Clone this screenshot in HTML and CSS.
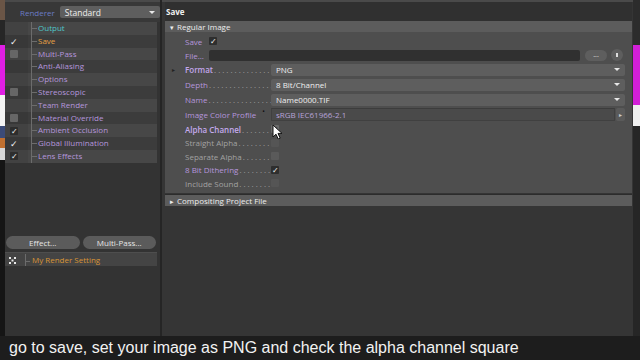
FILE: index.html
```html
<!DOCTYPE html>
<html lang="en">
<head>
  <meta charset="utf-8">
  <title>Render Settings - Save</title>
  <link rel="stylesheet" href="styles.css">
</head>
<body>
  <div class="screen">
    <div class="main">
      <div class="desk desk-left"></div>

      <!-- left: render setting list -->
      <aside class="left">
        <div class="renderer">
          <span class="renderer-label">Renderer</span>
          <div class="select renderer-select"><span>Standard</span><i class="arrow"></i></div>
        </div>
        <ul class="tree">
          <li class="alt"><span class="chk"></span><span class="node teal">Output</span></li>
          <li><span class="chk"><b class="tick">✓</b></span><span class="node orange">Save</span></li>
          <li class="alt"><span class="chk"><b class="box"></b></span><span class="node">Multi-Pass</span></li>
          <li><span class="chk"></span><span class="node">Anti-Aliasing</span></li>
          <li class="alt"><span class="chk"></span><span class="node">Options</span></li>
          <li><span class="chk"><b class="box"></b></span><span class="node">Stereoscopic</span></li>
          <li class="alt"><span class="chk"></span><span class="node">Team Render</span></li>
          <li><span class="chk"><b class="box"></b></span><span class="node">Material Override</span></li>
          <li class="alt"><span class="chk"><b class="box on">✓</b></span><span class="node">Ambient Occlusion</span></li>
          <li><span class="chk"><b class="tick">✓</b></span><span class="node">Global Illumination</span></li>
          <li class="alt"><span class="chk"><b class="box on">✓</b></span><span class="node">Lens Effects</span></li>
        </ul>
        <div class="left-fill"></div>
        <div class="left-buttons">
          <button>Effect...</button>
          <button>Multi-Pass...</button>
        </div>
        <div class="setting-row">
          <svg class="setting-icon" width="7" height="7" viewBox="0 0 7 7"><g fill="#e8e8e8"><rect x="0" y="0" width="2" height="2"/><rect x="5" y="0" width="2" height="2"/><rect x="2.5" y="2.5" width="2" height="2"/><rect x="0" y="5" width="2" height="2"/><rect x="5" y="5" width="2" height="2"/></g></svg>
          <span class="setting-name">My Render Setting</span>
        </div>
      </aside>

      <div class="vsep"></div>

      <!-- right: save page -->
      <section class="right">
        <div class="head">Save</div>
        <div class="group-bar"><span class="tri">▾</span>Regular Image</div>
        <div class="group-body">
          <div class="prop">
            <span class="bullet"></span><span class="label short">Save</span>
            <span class="cb on">✓</span>
          </div>
          <div class="prop">
            <span class="bullet"></span><span class="label short">File...</span>
            <div class="file-field"></div>
            <button class="pill">...</button>
            <button class="round"><i></i></button>
          </div>
          <div class="prop tall">
            <span class="bullet">▸</span><span class="label strong"><span>Format</span><span class="dots">.....................</span></span>
            <div class="select"><span>PNG</span><i class="arrow"></i></div>
          </div>
          <div class="prop tall">
            <span class="bullet"></span><span class="label"><span>Depth</span><span class="dots">.....................</span></span>
            <div class="select"><span>8 Bit/Channel</span><i class="arrow"></i></div>
          </div>
          <div class="prop tall">
            <span class="bullet"></span><span class="label"><span>Name</span><span class="dots">.....................</span></span>
            <div class="select"><span>Name0000.TIF</span><i class="arrow"></i></div>
          </div>
          <div class="prop tall">
            <span class="bullet"></span><span class="label"><span>Image Color Profile</span><span class="mark">•</span></span>
            <div class="profile">sRGB IEC61966-2.1</div>
            <button class="side-btn">▸</button>
          </div>
          <div class="prop">
            <span class="bullet"></span><span class="label semi"><span>Alpha Channel</span><span class="dots">.....................</span></span>
            <span class="cb hover">✓
              <svg class="cursor" width="11" height="16" viewBox="0 0 11 16"><path d="M1 1 L1 13 L4 10.2 L6.2 15 L8.2 14.1 L6 9.4 L10 9.4 Z" fill="#fff" stroke="#111" stroke-width="1" stroke-linejoin="round"/></svg>
            </span>
          </div>
          <div class="prop short-row">
            <span class="bullet"></span><span class="label dim"><span>Straight Alpha</span><span class="dots">.....................</span></span>
            <span class="cb off"></span>
          </div>
          <div class="prop short-row">
            <span class="bullet"></span><span class="label dim"><span>Separate Alpha</span><span class="dots">.....................</span></span>
            <span class="cb"></span>
          </div>
          <div class="prop short-row">
            <span class="bullet"></span><span class="label"><span>8 Bit Dithering</span><span class="dots">.....................</span></span>
            <span class="cb on">✓</span>
          </div>
          <div class="prop short-row">
            <span class="bullet"></span><span class="label dim"><span>Include Sound</span><span class="dots">.....................</span></span>
            <span class="cb off"></span>
          </div>
        </div>
        <div class="group-bar closed"><span class="tri">▸</span>Compositing Project File</div>
        <div class="right-fill"></div>
      </section>

      <div class="desk desk-right"></div>
    </div>
    <div class="caption">go to save, set your image as PNG and check the alpha channel square</div>
  </div>
</body>
</html>
```

FILE: styles.css
```css
/* --- page --- */
*{box-sizing:border-box}
body{margin:0;background:#1c1c1c;font-family:"Open Sans",Arial,sans-serif;font-size:8px;color:#ddd}
.screen{width:640px;height:360px;display:flex;flex-direction:column;overflow:hidden}
.main{height:336px;display:flex;background:#2f2f2f}
ul{list-style:none;margin:0;padding:0}
button{font-family:inherit;font-size:8px;border:none;color:#e6e6e6;padding:0;cursor:pointer}

/* --- bits of the desktop showing at the sides --- */
.desk{flex:none}
.desk-left{width:5px;background:linear-gradient(#6a5546 0 20px,#262626 20px 45px,#e01ee4 45px 95px,#f3f3f3 95px 126px,#3b4b78 126px 138px,#c07030 138px 148px,#d8d8d8 148px 160px,#151515 160px)}
.desk-right{width:7px;background:linear-gradient(#2c2c2c 0 45px,#d21fd8 45px 105px,#efefef 105px 126px,#262626 126px)}

/* --- left panel --- */
.left{width:155px;display:flex;flex-direction:column;background:#333;border-top:2px solid #4a4a4a}
.renderer{height:20px;display:flex;align-items:center;padding-left:15px;gap:5px;background:#383838}
.renderer-label{color:#6b7cc4;font-size:8px}
.select{position:relative;display:flex;align-items:center;height:12px;background:#5e5e5e;border-radius:2px;padding-left:5px;color:#eee}
.renderer-select{width:96px;font-size:8.5px}
.arrow{position:absolute;right:5px;top:4.5px;width:0;height:0;border-left:3px solid transparent;border-right:3px solid transparent;border-top:3px solid #e8e8e8}

.tree{width:152px}
.tree li{display:flex;height:12.8px;background:#3c3c3c}
.tree li.alt{background:#474747}
.chk{width:23px;display:flex;align-items:center;padding-left:5px;background:rgba(0,0,0,.06)}
.tick{font-weight:normal;color:#f2f2f2;font-size:9px;line-height:1}
.box{width:8px;height:8px;background:#666;border-radius:1px;font-size:8px;line-height:8px;text-align:center;color:#f2f2f2;font-weight:normal}
.box.on{background:#2d2d2d}
.node{position:relative;flex:1;margin-left:3px;padding-left:6px;border-left:1px solid #6c6c6c;line-height:12.8px;color:#b596dc}
.node::before{content:"";position:absolute;left:0;top:6px;width:5px;height:1px;background:#6c6c6c}
.node.teal{color:#4fc6c8}
.node.orange{color:#e6a044}

.left-fill{flex:1}
.left-buttons{display:flex;gap:3px;padding:0 4px 0 1px;margin-bottom:3px}
.left-buttons button{flex:1;height:13px;background:#5b5b5b;border-radius:7px;font-size:8px}
.setting-row{display:flex;align-items:center;height:14px;margin:0 3px 70px 0;border-top:1px solid #4e4e4e;background:#444;padding-top:1px}
.setting-icon{margin:0 9px 0 4px}
.setting-name{position:relative;padding-left:6px;border-left:1px solid #6c6c6c;color:#d89436;line-height:12px}
.setting-name::before{content:"";position:absolute;left:0;top:7px;width:4px;height:1px;background:#6c6c6c}

.vsep{width:2px;background:#252525}

/* --- right panel --- */
.right{flex:1;display:flex;flex-direction:column;padding-left:3px;padding-right:1px;background:#353535;border-top:2px solid #4a4a4a}
.head{height:19px;line-height:20px;padding-left:1px;background:#303030;color:#f0f0f0;font-weight:bold;font-size:8px}
.group-bar{height:11px;line-height:11px;background:#5c5c5c;color:#ececec;padding-left:5px;font-size:8px}
.group-bar.closed{margin-top:1px;border-top:1px solid #2c2c2c;height:12px}
.tri{display:inline-block;width:7px;font-size:7px}
.group-body{height:161px;background:#4e4e4e;padding:2px 7px 0 0}

.prop{display:flex;align-items:center;height:14px}
.prop.tall{height:15px}
.prop.short-row{height:13.5px}
.bullet{width:20px;padding-left:7px;font-size:6px;color:#222}
.label{width:86px;display:flex;align-items:center;white-space:nowrap;color:#b596dc}
.label.short{width:24px}
.label.strong{color:#c2a6ea;font-weight:600}
.label.semi{color:#c4aaec;font-weight:600}
.label.dim{color:#a2a2a2}
.dots{flex:1;min-width:0;overflow:hidden;letter-spacing:2px;margin-left:1px;color:#a0a0a0;font-weight:normal}
.mark{position:relative;top:-3px;margin-left:6px;color:#111;font-size:7px}

.select{flex:1}
.file-field{flex:1;height:11px;background:#303030;border-radius:2px}
.pill{width:22px;height:11px;margin-left:5px;border-radius:6px;background:#5e5e5e;font-size:7px;line-height:6px}
.round{width:12px;height:12px;margin:0 2px 0 4px;border-radius:50%;background:#5e5e5e;display:flex;align-items:center;justify-content:center}
.round i{width:2px;height:4px;background:#ddd}
.profile{flex:1;height:13px;line-height:12px;padding-left:4px;background:#4a4a4a;border:1px solid #404040;border-top-color:#3c3c3c;color:#b7a2d8}
.side-btn{width:9px;height:13px;margin-left:1px;background:#5a5a5a;border-radius:2px;font-size:6px;color:#ccc}

.cb{position:relative;width:8px;height:8px;border-radius:1px;background:#5a5a5a;font-size:8px;line-height:8px;text-align:center;color:#f2f2f2}
.cb.on{background:#2e2e2e}
.cb.off{background:#555}
.cb.hover{background:#6a6a6a;color:#3a3a3a}
.cursor{position:absolute;left:1px;top:-1px}

.right-fill{flex:1;background:#353535}

/* --- subtitle --- */
.caption{height:24px;padding-left:9px;line-height:24px;background:#1d1d1d;color:#f2f2f2;font-family:"Liberation Sans",Arial,sans-serif;font-size:16px;white-space:nowrap}
```
